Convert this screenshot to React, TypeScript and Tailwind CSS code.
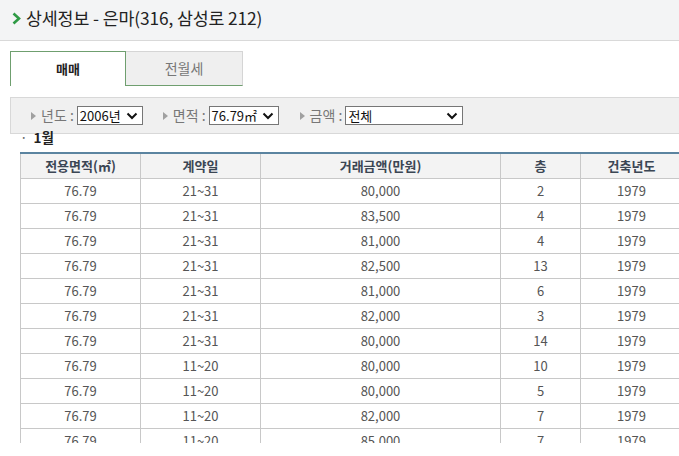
import React from "react";

const rows: [string, string, string, string, string][] = [
  ["76.79", "21~31", "80,000", "2", "1979"],
  ["76.79", "21~31", "83,500", "4", "1979"],
  ["76.79", "21~31", "81,000", "4", "1979"],
  ["76.79", "21~31", "82,500", "13", "1979"],
  ["76.79", "21~31", "81,000", "6", "1979"],
  ["76.79", "21~31", "82,000", "3", "1979"],
  ["76.79", "21~31", "80,000", "14", "1979"],
  ["76.79", "11~20", "80,000", "10", "1979"],
  ["76.79", "11~20", "80,000", "5", "1979"],
  ["76.79", "11~20", "82,000", "7", "1979"],
  ["76.79", "11~20", "85,000", "7", "1979"],
  ["76.79", "11~20", "85,000", "7", "1979"],
];

function Tri() {
  return (
    <svg width="5" height="8" viewBox="0 0 5 8" className="mr-[5px]">
      <path d="M0 0 L5 4 L0 8 Z" fill="#a0a0a0" />
    </svg>
  );
}

function Chev() {
  return (
    <svg width="12" height="8" viewBox="0 0 12 8">
      <path d="M1.5 1.5 L6 6 L10.5 1.5" stroke="#111" strokeWidth="2" fill="none" />
    </svg>
  );
}

function Sel({ w, text }: { w: string; text: string }) {
  return (
    <div className={`${w} h-[19px] border border-[#767676] bg-white flex items-center justify-between pl-[2px] pr-[4px] text-[13px] text-[#111] leading-none`}>
      <span>{text}</span>
      <Chev />
    </div>
  );
}

export default function App() {
  return (
    <div className="w-[679px] h-[443px] overflow-hidden bg-white text-[#333]" style={{ fontFamily: '"Noto Sans CJK KR", "Noto Sans", sans-serif' }}>
      <div className="h-[41px] bg-[#f3f4f5] border-b border-[#d9d9d9] flex items-center pl-[12px] pb-[4px]">
        <svg width="9" height="13" viewBox="0 0 9 13" className="mr-[5px]">
          <path d="M1.5 1.5 L7 6.5 L1.5 11.5" stroke="#2e9a44" strokeWidth="2.6" fill="none" />
        </svg>
        <span className="text-[17.3px] text-[#222] tracking-[-0.1px]">상세정보 - 은마(316, 삼성로 212)</span>
      </div>
      <div className="pl-[10px] pt-[10px]">
        <div className="flex h-[35px]">
          <div className="w-[116px] border border-[#6f9f6f] border-b-0 bg-white flex items-center justify-center text-[13px] font-bold text-[#222]">매매</div>
          <div className="w-[117px] border-b border-[#6f9f6f] border-t border-r border-t-[#d5d5d5] border-r-[#d5d5d5] bg-[#efefef] flex items-center justify-center text-[14px] text-[#777]">전월세</div>
        </div>
        <div className="mt-[11px] h-[37px] bg-[#f0f0f0] border border-[#d8d8d8] border-r-0 flex items-center pl-[20px] text-[14px] text-[#777]">
          <div className="flex items-center">
            <Tri />
            <span className="mr-[3px]">년도 :</span>
            <Sel w="w-[66px]" text="2006년" />
          </div>
          <div className="flex items-center ml-[20px]">
            <Tri />
            <span className="mr-[3px]">면적 :</span>
            <Sel w="w-[70px]" text="76.79㎡" />
          </div>
          <div className="flex items-center ml-[21px]">
            <Tri />
            <span className="mr-[3px]">금액 :</span>
            <Sel w="w-[118px]" text="전체" />
          </div>
        </div>
        <div className="pl-[10px] h-[18px] flex items-start text-[13.5px] font-bold text-[#222] leading-[7px]">
          <span className="mr-[6px] text-[#666] font-normal">·</span>1월
        </div>
        <div className="ml-[10px] w-[662px]">
          <table className="w-[662px] border-collapse table-fixed text-[13px]">
            <colgroup>
              <col className="w-[120px]" />
              <col className="w-[120px]" />
              <col className="w-[240px]" />
              <col className="w-[80px]" />
              <col className="w-[102px]" />
            </colgroup>
            <thead>
              <tr className="h-[25px] bg-[#f3f3f3] border-t-2 border-t-[#5b84a0]">
                {["전용면적(㎡)", "계약일", "거래금액(만원)", "층", "건축년도"].map((h) => (
                  <th key={h} className="border-x border-b border-[#c8c8c8] font-bold text-[#3b4654] text-center p-0 leading-none">{h}</th>
                ))}
              </tr>
            </thead>
            <tbody>
              {rows.map((r, i) => (
                <tr key={i} className="h-[25px]">
                  {r.map((c, j) => (
                    <td key={j} className="border border-[#c8c8c8] text-center text-[#555] p-0 leading-none">{c}</td>
                  ))}
                </tr>
              ))}
            </tbody>
          </table>
        </div>
      </div>
    </div>
  );
}
